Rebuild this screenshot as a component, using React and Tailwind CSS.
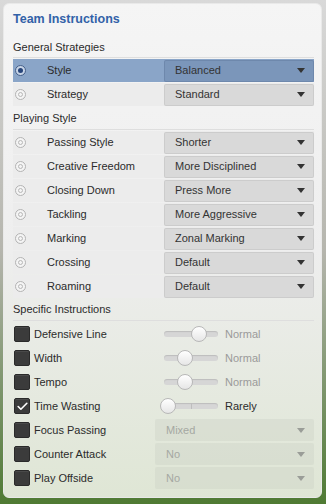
import { Check } from 'lucide-react';

const font = { fontFamily: '"Liberation Sans", Arial, sans-serif' };

const general = [
  { name: 'Style', value: 'Balanced', active: true },
  { name: 'Strategy', value: 'Standard' },
];

const playing = [
  { name: 'Passing Style', value: 'Shorter' },
  { name: 'Creative Freedom', value: 'More Disciplined' },
  { name: 'Closing Down', value: 'Press More' },
  { name: 'Tackling', value: 'More Aggressive' },
  { name: 'Marking', value: 'Zonal Marking' },
  { name: 'Crossing', value: 'Default' },
  { name: 'Roaming', value: 'Default' },
];

// sliders: knob position in px along a 54px track
const sliders = [
  { name: 'Defensive Line', value: 'Normal', knob: 27 },
  { name: 'Width', value: 'Normal', knob: 13 },
  { name: 'Tempo', value: 'Normal', knob: 13 },
  { name: 'Time Wasting', value: 'Rarely', knob: -4, checked: true },
];

const toggles = [
  { name: 'Focus Passing', value: 'Mixed' },
  { name: 'Counter Attack', value: 'No' },
  { name: 'Play Offside', value: 'No' },
];

function Arrow({ className }) {
  return (
    <svg width="8" height="5" viewBox="0 0 8 5" className={className}>
      <path d="M0 0h8L4 5z" fill="currentColor" />
    </svg>
  );
}

function Radio({ active }) {
  return (
    <span
      className={
        'w-[11px] h-[11px] rounded-full flex items-center justify-center border ' +
        (active ? 'border-[#46608a] bg-[#c7d4e6]' : 'border-[#b3b3b3] bg-[#f4f4f4]')
      }
    >
      <span
        className={
          'w-[5px] h-[5px] rounded-full ' +
          (active ? 'bg-[#27457a]' : 'border border-[#b8b8b8]')
        }
      />
    </span>
  );
}

function SelectRow({ item }) {
  return (
    <div
      className={
        'flex items-center h-[23px] mb-px ' +
        (item.active ? 'bg-[#8aa5c8]' : 'bg-[#ececec]')
      }
    >
      <div className="w-[34px] pl-[2px] flex items-center">
        <Radio active={item.active} />
      </div>
      <span className="flex-1 text-[11px] text-[#2b2b2b]">{item.name}</span>
      <div
        className={
          'w-[150px] h-[22px] rounded-[2px] flex items-center pl-[11px] pr-[9px] ' +
          (item.active
            ? 'bg-[#7b96ba] shadow-[inset_0_0_0_1px_rgba(70,95,130,0.25)]'
            : 'bg-[#d9d9d9] shadow-[inset_0_0_0_1px_rgba(0,0,0,0.06)]')
        }
      >
        <span className="flex-1 text-[11px] text-[#333]">{item.value}</span>
        <Arrow className="text-[#333]" />
      </div>
    </div>
  );
}

function Box({ checked }) {
  return (
    <span className="w-[16px] h-[16px] rounded-[2px] bg-[#3b3b3b] border border-[#2a2a2a] flex items-center justify-center shadow-[inset_0_1px_0_rgba(255,255,255,0.08)]">
      {checked && <Check size={13} strokeWidth={3} className="text-white" />}
    </span>
  );
}

function Section({ title, first, children }) {
  return (
    <div>
      <div
        className={
          'flex items-center text-[11px] text-[#2b2b2b] border-b border-[#dedede] mb-[1px] ' +
          (first ? 'h-[20px]' : 'h-[22px]')
        }
      >
        {title}
      </div>
      {children}
    </div>
  );
}

export default function App() {
  return (
    <div
      style={font}
      className="w-[326px] h-[504px] pt-[3px] pl-[3px] pr-[4px] pb-[6px] bg-gradient-to-b from-[#d9d9d9] via-[#b5b5ad] to-[#4f7a33]"
    >
      <div className="h-full rounded-[6px] bg-gradient-to-b from-[#f5f5f5] via-[#eeeeee] to-[#dfe6d5] border border-[#e9e9e9] pl-[9px] pr-[7px] pt-[4px]">
        <h1 className="text-[12.5px] font-bold text-[#3262a8] h-[22px] flex items-center">
          Team Instructions
        </h1>
        <div className="h-[8px]" />

        <Section title="General Strategies" first>
          {general.map((g) => (
            <SelectRow key={g.name} item={g} />
          ))}
        </Section>
        <div className="h-[1px]" />

        <Section title="Playing Style">
          {playing.map((p) => (
            <SelectRow key={p.name} item={p} />
          ))}
        </Section>

        <Section title="Specific Instructions">
          {sliders.map((s) => (
            <div key={s.name} className="flex items-center h-[24px]">
              <div className="w-[21px] pl-[1px]">
                <Box checked={s.checked} />
              </div>
              <span className="w-[130px] text-[11px] text-[#2b2b2b]">{s.name}</span>
              <div className="relative w-[54px] h-[6px] rounded-full bg-[#d6d6d6] shadow-[inset_0_1px_1px_rgba(0,0,0,0.12)]">
                {s.checked && <span className="absolute left-[27px] top-0 w-px h-full bg-[#bdbdbd]" />}
                <span
                  className="absolute top-1/2 -translate-y-1/2 w-[16px] h-[16px] rounded-full bg-gradient-to-b from-white to-[#e6e6e6] border border-[#b8b8b8]"
                  style={{ left: s.knob }}
                />
              </div>
              <span
                className={
                  'ml-[7px] text-[11px] ' + (s.checked ? 'text-[#2b2b2b]' : 'text-[#9a9a9a]')
                }
              >
                {s.value}
              </span>
            </div>
          ))}
          {toggles.map((t) => (
            <div key={t.name} className="flex items-center h-[24px]">
              <div className="w-[21px] pl-[1px]">
                <Box />
              </div>
              <span className="flex-1 text-[11px] text-[#2b2b2b]">{t.name}</span>
              <div className="w-[159px] h-[22px] rounded-[2px] bg-[rgba(200,205,195,0.35)] flex items-center pl-[11px] pr-[9px]">
                <span className="flex-1 text-[11px] text-[#a5a8a2]">{t.value}</span>
                <Arrow className="text-[#9a9d98]" />
              </div>
            </div>
          ))}
        </Section>
      </div>
    </div>
  );
}
